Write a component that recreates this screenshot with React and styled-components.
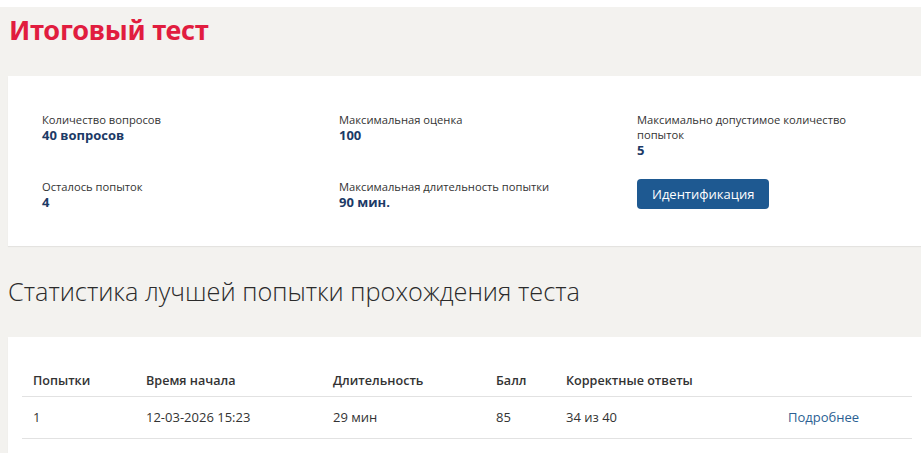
import React from 'react';
import styled, { createGlobalStyle } from 'styled-components';

const COLORS = {
  page: '#f3f2ef',
  red: '#e11d3f',
  navy: '#1c3a66',
  text: '#333333',
  button: '#1e5991',
  link: '#2b5f93',
  line: '#e2e2e2',
};

const GlobalStyle = createGlobalStyle`
  html, body {
    margin: 0;
    padding: 0;
    background: #ffffff;
  }
  body {
    font-family: "Open Sans", "Noto Sans", sans-serif;
    color: ${COLORS.text};
  }
`;

const Page = styled.div`
  margin-top: 7px;
  background: ${COLORS.page};
  padding: 0 0 0 8px;
  min-height: 446px;
  overflow: hidden;
`;

const Title = styled.h1`
  margin: 0;
  padding: 4px 0 0 1px;
  height: 69px;
  box-sizing: border-box;
  font-family: "Noto Sans", sans-serif;
  font-weight: 700;
  font-size: 27px;
  letter-spacing: -0.2px;
  color: ${COLORS.red};
`;

const Panel = styled.section`
  background: #ffffff;
  box-shadow: 0 1px 1px rgba(0, 0, 0, 0.06);
`;

const InfoPanel = styled(Panel)`
  height: 170px;
  box-sizing: border-box;
  padding: 36px 0 0 34px;
`;

const InfoGrid = styled.div`
  display: grid;
  grid-template-columns: 297px 298px 1fr;
  row-gap: 20px;
`;

const Item = styled.div`
  display: flex;
  flex-direction: column;
  align-items: flex-start;
`;

const Label = styled.div`
  font-size: 11.2px;
  line-height: 15px;
  max-width: 212px;
`;

const Value = styled.div`
  font-size: 13px;
  line-height: 17px;
  font-weight: 700;
  color: ${COLORS.navy};
`;

const Button = styled.button`
  height: 30px;
  padding: 0 15px;
  border: none;
  border-radius: 4px;
  background: ${COLORS.button};
  color: #ffffff;
  font-family: inherit;
  font-size: 13px;
  cursor: pointer;
`;

const Subtitle = styled.h2`
  margin: 0;
  height: 91px;
  padding-top: 28px;
  box-sizing: border-box;
  font-family: "Open Sans", sans-serif;
  font-weight: 300;
  font-size: 25.3px;
  color: #2b2b2b;
`;

const TablePanel = styled(Panel)`
  padding: 17px 9px 20px 14px;
`;

const Table = styled.table`
  width: 890px;
  table-layout: fixed;
  border-collapse: collapse;
  font-size: 13px;
`;

const Th = styled.th`
  text-align: left;
  vertical-align: bottom;
  font-weight: 600;
  font-size: 12.6px;
  height: 42px;
  padding: 0 11px 7px;
  box-sizing: border-box;
  width: ${p => p.$w}px;
  border-bottom: 1px solid ${COLORS.line};
`;

const Td = styled.td`
  height: 41px;
  padding: 0 11px;
  border-bottom: 1px solid ${COLORS.line};
`;

const Link = styled.a`
  color: ${COLORS.link};
  text-decoration: none;
`;

const info = [
  { label: 'Количество вопросов', value: '40 вопросов' },
  { label: 'Максимальная оценка', value: '100' },
  { label: 'Максимально допустимое количество попыток', value: '5' },
  { label: 'Осталось попыток', value: '4' },
  { label: 'Максимальная длительность попытки', value: '90 мин.' },
];

const columns = [
  { title: 'Попытки', w: 113 },
  { title: 'Время начала', w: 187 },
  { title: 'Длительность', w: 163 },
  { title: 'Балл', w: 70 },
  { title: 'Корректные ответы', w: 222 },
  { title: '', w: 135 },
];

const App = () => (
  <>
    <GlobalStyle />
    <Page>
      <Title>Итоговый тест</Title>
      <InfoPanel>
        <InfoGrid>
          {info.map(i => (
            <Item key={i.label}>
              <Label>{i.label}</Label>
              <Value>{i.value}</Value>
            </Item>
          ))}
          <Item>
            <Button>Идентификация</Button>
          </Item>
        </InfoGrid>
      </InfoPanel>
      <Subtitle>Статистика лучшей попытки прохождения теста</Subtitle>
      <TablePanel>
        <Table>
          <thead>
            <tr>
              {columns.map((c, i) => (
                <Th key={i} $w={c.w}>{c.title}</Th>
              ))}
            </tr>
          </thead>
          <tbody>
            <tr>
              <Td>1</Td>
              <Td>12-03-2026 15:23</Td>
              <Td>29 мин</Td>
              <Td>85</Td>
              <Td>34 из 40</Td>
              <Td><Link href="#">Подробнее</Link></Td>
            </tr>
          </tbody>
        </Table>
      </TablePanel>
    </Page>
  </>
);

export default App;
